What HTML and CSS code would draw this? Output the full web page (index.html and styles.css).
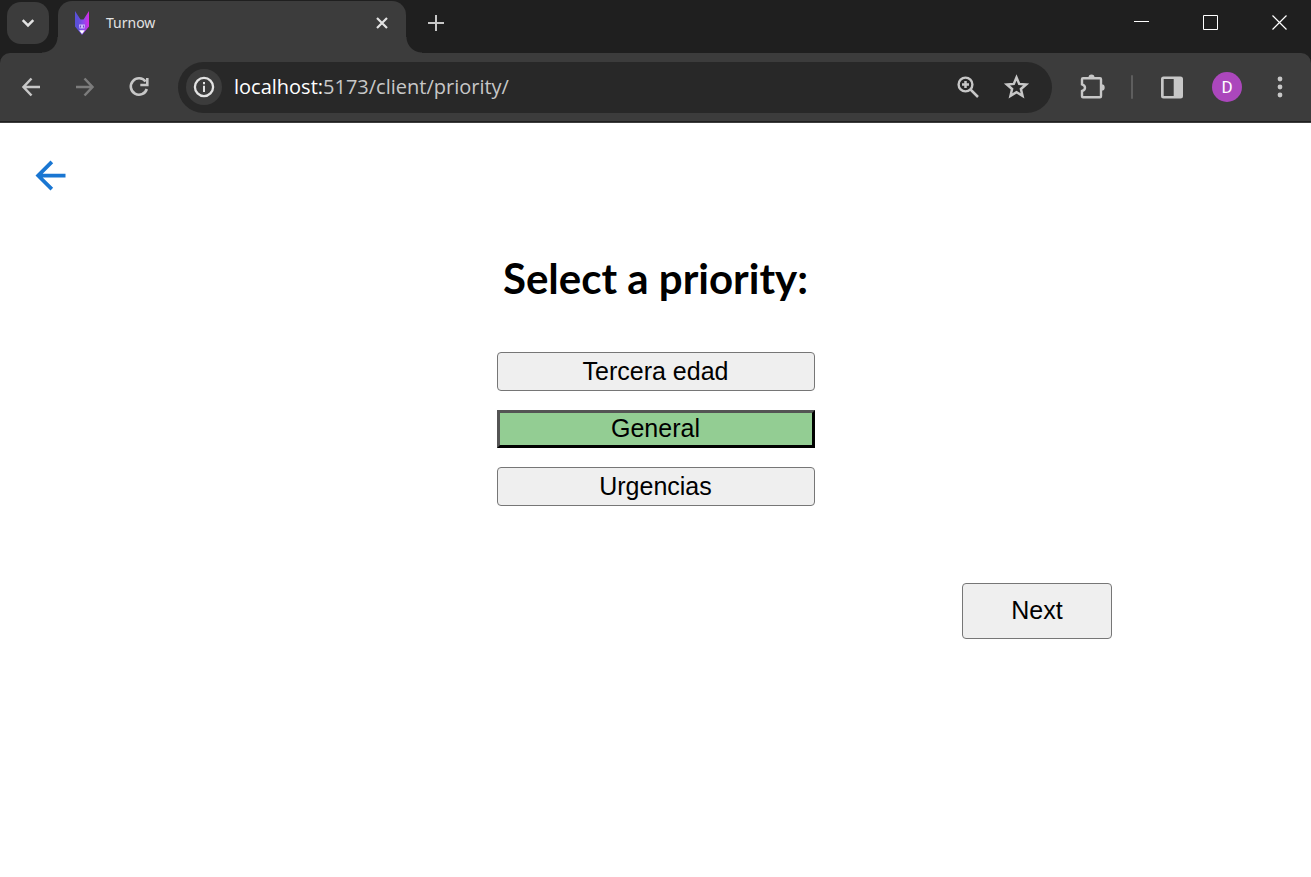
FILE: index.html
```html
<!DOCTYPE html>
<html lang="en">
<head>
<meta charset="utf-8">
<meta name="viewport" content="width=device-width, initial-scale=1">
<title>Turnow</title>
<link rel="stylesheet" href="styles.css">
</head>
<body>
<header class="browser">
  <div class="tabstrip">
    <button class="tab-search" aria-label="Search tabs">
      <svg width="14" height="10" viewBox="0 0 14 10"><path d="M1.700 2.200 7 7.400l5.300-5.200" fill="none" stroke="currentColor" stroke-width="2.500"/></svg>
    </button>
    <div class="tab">
      <svg class="favicon" width="16" height="26" viewBox="0 0 16 26">
        <defs><linearGradient id="fox" x1="0" x2="1"><stop offset=".2" stop-color="#5b50d8"/><stop offset=".6" stop-color="#8a48ee"/><stop offset="1" stop-color="#d92be4"/></linearGradient></defs>
        <path d="M1 1 6.500 9.500h3L15 1v15.500L8 25 1 16.500Z" fill="url(#fox)"/>
        <path d="M5 14.500h6l-.5 4h-5Z" fill="#c9b8fa"/>
        <path d="M6.500 15.500v2M9.500 15.500v2" stroke="#6a48c8"/>
        <path d="M5.200 20.200h5.600L8 24Z" fill="#fff"/>
      </svg>
      <span class="tab-title">Turnow</span>
      <button class="icon-button tab-close" aria-label="Close tab">
        <svg width="14" height="14" viewBox="0 0 14 14"><path d="m2 2 10 10M12 2 2 12" stroke="currentColor" stroke-width="2.200"/></svg>
      </button>
    </div>
    <button class="icon-button new-tab" aria-label="New tab">
      <svg width="16" height="16" viewBox="0 0 16 16"><path d="M8 0v16M0 8h16" stroke="currentColor" stroke-width="2"/></svg>
    </button>
    <div class="window-controls">
      <button class="icon-button" aria-label="Minimize"><svg width="15" height="15" viewBox="0 0 15 15"><path d="M0 6.500h15" stroke="currentColor"/></svg></button>
      <button class="icon-button" aria-label="Maximize"><svg width="15" height="15" viewBox="0 0 15 15"><path d="M.5.5h14v14H.5Z" fill="none" stroke="currentColor"/></svg></button>
      <button class="icon-button" aria-label="Close"><svg width="15" height="15" viewBox="0 0 15 15"><path d="m.5.5 14 14M14.500.5l-14 14" stroke="currentColor" stroke-width="1.200"/></svg></button>
    </div>
  </div>
  <div class="toolbar">
    <nav class="history" aria-label="History">
      <button class="icon-button" aria-label="Back"><svg class="icon" viewBox="0 0 28 28"><path d="M23 14H7M14.500 5.500 6.500 14l8 8.500" fill="none" stroke="currentColor" stroke-width="2.500"/></svg></button>
      <button class="icon-button dim" aria-label="Forward"><svg class="icon" viewBox="0 0 28 28"><path d="M5 14h16M13.500 5.500l8 8.500-8 8.500" fill="none" stroke="currentColor" stroke-width="2.500"/></svg></button>
      <button class="icon-button" aria-label="Reload"><svg class="icon" viewBox="0 0 28 28"><path d="M20.600 8.600A8.200 8.200 0 1 0 21.800 16M22.300 5v7h-7" fill="none" stroke="currentColor" stroke-width="2.600"/></svg></button>
    </nav>
    <div class="omnibox">
      <button class="icon-button site-info" aria-label="View site information"><svg width="22" height="22" viewBox="0 0 22 22"><circle cx="11" cy="11" r="9.100" fill="none" stroke="currentColor" stroke-width="2.300"/><path d="M11 9.700V16M11 6v2.300" stroke="currentColor" stroke-width="2"/></svg></button>
      <div class="url"><span class="host">localhost:</span>5173/client/priority/</div>
      <button class="icon-button" aria-label="Zoom"><svg class="icon" viewBox="0 0 28 28"><circle cx="11.500" cy="11.500" r="6.900" fill="none" stroke="currentColor" stroke-width="2.400"/><path d="m16.500 16.500 7.500 7.500M11.500 8v7M8 11.500h7" stroke="currentColor" stroke-width="2.500"/></svg></button>
      <button class="icon-button" aria-label="Bookmark this tab"><svg class="icon" viewBox="0 0 28 28"><path d="m13.500 4.500 2.700 6.400 6.900.6-5.200 4.500 1.600 6.800-6-3.600-6 3.600L9.100 16l-5.200-4.500 6.900-.6Z" fill="none" stroke="currentColor" stroke-width="2.500"/></svg></button>
    </div>
    <button class="icon-button extensions" aria-label="Extensions"><svg class="icon" viewBox="0 0 28 28"><path d="M5 5.200h17q1 0 1 1v17q0 1-1 1H5q-1 0-1-1v-5.200q3-1 3-3.300T4 11.400V6.200q0-1 1-1Z" fill="none" stroke="currentColor" stroke-width="2.400"/><path d="M10.500 4.500a3 3 0 0 1 6 0ZM23.500 11.300a3.200 3.200 0 0 1 0 6.400Z" fill="currentColor"/></svg></button>
    <span class="divider"></span>
    <button class="icon-button side-panel" aria-label="Side panel"><svg class="icon" viewBox="0 0 28 28"><path fill-rule="evenodd" d="M5.500 3.500h17q2.500 0 2.500 2.500v17q0 2.500-2.500 2.500h-17Q3 25.500 3 23V6q0-2.500 2.500-2.500ZM5.700 6v17h10V6Z" fill="currentColor"/></svg></button>
    <button class="avatar" aria-label="Profile">D</button>
    <button class="icon-button menu" aria-label="Menu"><svg class="icon" viewBox="0 0 28 28" fill="currentColor"><circle cx="14" cy="6" r="2.400"/><circle cx="14" cy="14" r="2.400"/><circle cx="14" cy="22" r="2.400"/></svg></button>
  </div>
</header>
<main class="page">
  <a class="back" href="#" aria-label="Go back"><svg width="45" height="45" viewBox="0 0 24 24"><path d="M20 11H7.830l5.590-5.590L12 4l-8 8 8 8 1.410-1.410L7.830 13H20v-2z" fill="currentColor"/></svg></a>
  <h1 class="heading">Select a priority:</h1>
  <div class="priorities">
    <button class="button">Tercera edad</button>
    <button class="button selected" aria-pressed="true">General</button>
    <button class="button">Urgencias</button>
  </div>
  <div class="actions"><button class="button next">Next</button></div>
</main>
</body>
</html>
```
FILE: styles.css
```css
* { box-sizing: border-box; }
body { margin: 0; min-height: 100vh; background: #fff; color: #000; }
svg { display: block; flex: none; }
button { font: inherit; }

.browser { background: #1f1f1f; color: #c7c7c7; font-family: "Open Sans", "Noto Sans", sans-serif; }
.icon-button { display: flex; align-items: center; justify-content: center; flex: none; padding: 0; border: 0; background: none; color: inherit; }
.icon { width: 28px; height: 28px; }

.tabstrip { display: flex; align-items: flex-start; height: 53px; }
.tab-search { display: flex; align-items: center; justify-content: center; width: 42px; height: 42px; margin: 2px 9px 0 7px; padding: 0; border: 0; border-radius: 14px; background: #3c3c3c; color: #e3e3e3; }
.tab { position: relative; display: flex; align-items: center; width: 348px; height: 52px; margin-top: 1px; padding: 0 17px 8px 16px; border-radius: 14px 14px 0 0; background: #3c3c3c; color: #e3e3e3; }
.tab::before, .tab::after { content: ""; position: absolute; bottom: 0; width: 16px; height: 16px; }
.tab::before { right: 100%; background: radial-gradient(circle at 0 0, transparent 15px, #3c3c3c 16px); }
.tab::after { left: 100%; background: radial-gradient(circle at 100% 0, transparent 15px, #3c3c3c 16px); }
.tab-title { flex: 1; margin-left: 16px; font-family: "Noto Sans", sans-serif; font-size: 14px; line-height: 20px; }
.new-tab { width: 16px; height: 46px; margin-left: 22px; }
.window-controls { display: flex; gap: 54px; margin-left: auto; padding: 15px 24px 0 0; color: #fff; }

.toolbar { display: flex; align-items: center; height: 70px; padding: 0 17px 2px; border-radius: 10px 10px 0 0; background: #3c3c3c; box-shadow: inset 0 -1px #3c3c3c, inset 0 -2px #1f1f1f; }
.history { display: flex; gap: 26px; }
.dim { color: #7c7c7c; }
.omnibox { display: flex; flex: 1; align-items: center; gap: 21px; height: 51px; margin-left: 25px; padding: 0 21px 0 8px; border-radius: 26px; background: #282828; }
.site-info { width: 36px; height: 36px; border-radius: 50%; background: #3c3c3c; color: #e3e3e3; }
.url { flex: 1; margin-left: -9px; font-size: 20px; line-height: 28px; white-space: nowrap; }
.host { color: #fff; }
.extensions { margin-left: 26px; }
.divider { width: 2px; height: 24px; margin: 0 25px; border-radius: 1px; background: #5e5e5e; }
.avatar { width: 30px; height: 30px; margin: 0 24px 0 26px; padding: 0; border: 0; border-radius: 50%; background: #ab47bc; color: #fff; font-family: Roboto, sans-serif; font-size: 17px; line-height: 30px; text-align: center; }

.page { padding: 30px 28px; }
.back { display: block; width: 45px; color: #1976d2; }
.heading { margin: 52px 0 46px; font-family: Lato, sans-serif; font-size: 42px; font-weight: 700; line-height: 56px; text-align: center; }
.priorities { display: grid; gap: 19px; width: 318px; margin: 0 auto; }
.button { height: 39px; padding: 0 6px 2px; border: 1px solid #767676; border-radius: 4px; background: #efefef; color: #000; font-family: "Liberation Sans", Arial, sans-serif; font-size: 25px; line-height: 28px; }
.selected { height: 38px; border: 3px outset #000; border-radius: 0; background: #93cd93; }
.actions { display: flex; justify-content: flex-end; margin-top: 77px; padding-right: 171px; }
.next { width: 150px; height: 56px; }
```
